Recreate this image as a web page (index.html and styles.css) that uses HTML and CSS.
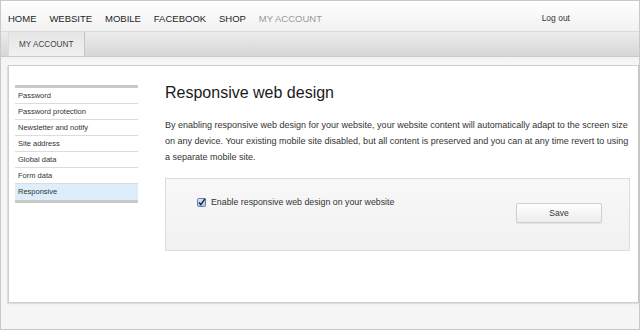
FILE: index.html
```html
<!DOCTYPE html>
<html>
<head>
<meta charset="utf-8">
<link rel="stylesheet" href="styles.css">
</head>
<body>
<div class="page">
  <nav class="topnav">
    <a class="nav-item">HOME</a>
    <a class="nav-item">WEBSITE</a>
    <a class="nav-item">MOBILE</a>
    <a class="nav-item">FACEBOOK</a>
    <a class="nav-item">SHOP</a>
    <a class="nav-item nav-current">MY ACCOUNT</a>
    <a class="logout">Log out</a>
  </nav>
  <div class="subbar">
    <div class="tab">MY ACCOUNT</div>
  </div>
  <div class="strip"></div>
  <div class="panel">
    <ul class="sidebar">
      <li>Password</li>
      <li>Password protection</li>
      <li>Newsletter and notify</li>
      <li>Site address</li>
      <li>Global data</li>
      <li>Form data</li>
      <li class="active">Responsive</li>
    </ul>
    <main class="main">
      <h1 class="title">Responsive web design</h1>
      <p class="desc">By enabling responsive web design for your website, your website content will automatically adapt to the screen size on any device. Your existing mobile site disabled, but all content is preserved and you can at any time revert to using a separate mobile site.</p>
      <div class="formbox">
        <label class="check">
          <svg class="cb" width="9" height="9" viewBox="0 0 9 9">
            <defs>
              <linearGradient id="cbg" x1="0" y1="0" x2="0" y2="1">
                <stop offset="0" stop-color="#dbe6f5"/>
                <stop offset="1" stop-color="#a9c1e3"/>
              </linearGradient>
            </defs>
            <rect x="0.5" y="0.5" width="8" height="8" rx="1" fill="url(#cbg)" stroke="#6b7fa3"/>
            <path d="M2 4.6 L3.8 6.6 L8.2 0.6" fill="none" stroke="#1b2a4a" stroke-width="1.5"/>
          </svg>
          <span>Enable responsive web design on your website</span>
        </label>
        <button class="save">Save</button>
      </div>
    </main>
  </div>
</div>
</body>
</html>
```
FILE: styles.css
```css
* { box-sizing: border-box; }
html, body { margin: 0; padding: 0; }
body {
  font-family: "Liberation Sans", Arial, sans-serif;
  background: #f5f5f5;
}
.page {
  width: 640px;
  height: 330px;
  border: 1px solid #c9c9c9;
  background: #f5f5f5;
  display: flex;
  flex-direction: column;
  overflow: hidden;
}
.topnav {
  height: 31px;
  display: flex;
  align-items: center;
  padding: 4px 0 0 7px;
  background: linear-gradient(#ffffff, #f1f1f1);
  border-bottom: 1px solid #dadada;
}
.nav-item {
  font-size: 9.5px;
  color: #1e1e1e;
  margin-right: 12.9px;
}
.nav-current { color: #9a9a9a; }
.logout {
  margin-left: auto;
  margin-right: 69px;
  font-size: 8.5px;
  color: #333;
}
.subbar {
  height: 25px;
  background: linear-gradient(#ececec, #d6d6d9);
  border-bottom: 1px solid #c9c9cc;
  padding-left: 7px;
  display: flex;
}
.tab {
  width: 77px;
  height: 100%;
  background: linear-gradient(#e6e6e6, #f0f0f0);
  border-left: 1px solid #dcdcdc;
  border-right: 1px solid #c4c4c4;
  font-size: 8.2px;
  color: #444;
  padding-left: 10px;
  display: flex;
  align-items: center;
  padding-top: 1px;
}
.strip {
  height: 8px;
  background: linear-gradient(#f2f2f2, #f7f7f7);
}
.panel {
  margin-left: 7px;
  height: 238px;
  background: #fff;
  border: 1px solid #cfcfcf;
  border-right: 1px solid #c4c4c4;
  box-shadow: -1px 1px 1px #dedede;
  display: flex;
  padding: 19px 8px 0 6px;
}
.sidebar {
  list-style: none;
  margin: 0;
  padding: 0;
  width: 123px;
  flex: none;
  border-top: 3px solid #c9c9c9;
  border-bottom: 3px solid #c9c9c9;
  align-self: flex-start;
}
.sidebar li {
  height: 16px;
  line-height: 16px;
  font-size: 7.5px;
  color: #333;
  padding-left: 3px;
  border-bottom: 1px solid #dcdcdc;
}
.sidebar li:last-child { border-bottom: 0; }
.sidebar li.active { background: #ddedfa; }
.main {
  margin-left: 27px;
  flex: 1;
}
.title {
  margin: -2px 0 0 0;
  font-size: 16px;
  line-height: 20px;
  font-weight: normal;
  color: #1a1a1a;
}
.desc {
  margin: 14px 0 0 0;
  font-size: 9px;
  line-height: 16px;
  color: #333;
}
.formbox {
  margin-top: 13px;
  height: 73px;
  border: 1px solid #dcdcdc;
  background: linear-gradient(#f8f8f8, #f1f1f1);
  display: flex;
  align-items: flex-start;
  padding: 17px 27px 0 31px;
}
.check {
  display: flex;
  align-items: center;
  height: 12px;
  font-size: 8.8px;
  color: #333;
}
.cb { margin-right: 5px; margin-top: 1px; }
.save {
  margin-left: auto;
  margin-top: 7px;
  width: 86px;
  height: 20px;
  border: 1px solid #cfcfcf;
  border-radius: 2px;
  background: linear-gradient(#ffffff, #ececec);
  box-shadow: 0 1px 1px #e0e0e0;
  font-family: "Liberation Sans", Arial, sans-serif;
  font-size: 8.5px;
  color: #333;
  padding: 0;
}
```
